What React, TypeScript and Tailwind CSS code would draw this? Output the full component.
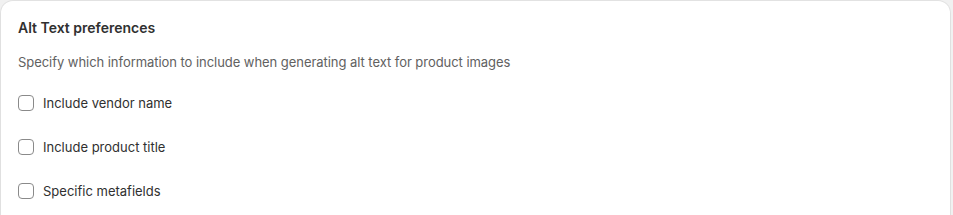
import * as React from "react";

const options = ["Include vendor name", "Include product title", "Specific metafields"];

export default function App(): React.ReactElement {
  const [checked, setChecked] = React.useState<Record<string, boolean>>({});

  return (
    <div className="h-[215px] overflow-hidden bg-[#f1f1f1] pl-px pr-[3px] pt-px font-['Inter',sans-serif] text-[#303030]">
      <section className="min-h-[260px] rounded-xl bg-white px-[17px] pt-[17px] shadow-[0_0_0_1px_rgba(0,0,0,0.06),0_1px_1px_rgba(0,0,0,0.08)]">
        <h2 className="text-[14px] font-semibold leading-5">Alt Text preferences</h2>
        <p className="mt-[14px] text-[13px] leading-5 tracking-[-0.05px] text-[#616161]">
          Specify which information to include when generating alt text for product images
        </p>
        <div className="mt-[21px] flex flex-col gap-6">
          {options.map((label) => (
            <label key={label} className="flex items-center gap-[9px] text-[13px] leading-5">
              <input
                type="checkbox"
                className="h-4 w-4 appearance-none rounded-[4px] border border-[#8a8a8a] bg-white checked:bg-[#303030]"
                checked={!!checked[label]}
                onChange={(event) => {
                  setChecked({ ...checked, [label]: event.target.checked });
                }}
              />
              <span>{label}</span>
            </label>
          ))}
        </div>
      </section>
    </div>
  );
}
